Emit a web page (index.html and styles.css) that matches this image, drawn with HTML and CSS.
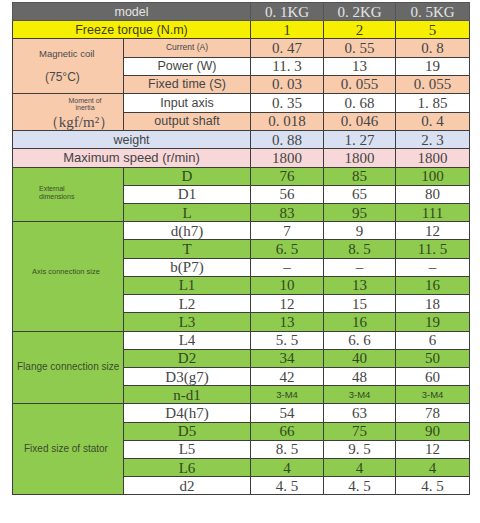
FILE: index.html
```html
<!DOCTYPE html>
<html lang="en">
<head>
    <meta charset="UTF-8">
    <meta name="viewport" content="width=device-width, initial-scale=1.0">
    <title>Brake parameters</title>
    <link rel="stylesheet" href="styles.css">
</head>
<body>
    <table class="spec">
        <colgroup>
            <col class="c-group">
            <col class="c-item">
            <col class="c-val">
            <col class="c-val2">
            <col class="c-val3">
        </colgroup>

        <tr class="head">
            <td colspan="2" class="sans">model</td>
            <td>0. 1KG</td><td>0. 2KG</td><td>0. 5KG</td>
        </tr>
        <tr class="yellow">
            <td colspan="2" class="sans">Freeze torque (N.m)</td>
            <td>1</td><td>2</td><td>5</td>
        </tr>

        <tr class="salmon">
            <td rowspan="3" class="coil">
                <div class="coil-name">Magnetic coil</div>
                <div class="coil-temp">(75°C)</div>
            </td>
            <td class="sans tiny top">Current (A)</td>
            <td>0. 47</td><td>0. 55</td><td>0. 8</td>
        </tr>
        <tr class="white">
            <td class="sans">Power (W)</td>
            <td>11. 3</td><td>13</td><td>19</td>
        </tr>
        <tr class="salmon">
            <td class="sans">Fixed time (S)</td>
            <td>0. 03</td><td>0. 055</td><td>0. 055</td>
        </tr>

        <tr class="white">
            <td rowspan="2" class="salmon-cell inertia">
                <div class="inertia-name">Moment of<br>inertia</div>
                <div class="inertia-unit">（kgf/m²）</div>
            </td>
            <td class="sans">Input axis</td>
            <td>0. 35</td><td>0. 68</td><td>1. 85</td>
        </tr>
        <tr class="salmon">
            <td class="sans">output shaft</td>
            <td>0. 018</td><td>0. 046</td><td>0. 4</td>
        </tr>

        <tr class="lavender">
            <td colspan="2" class="sans">weight</td>
            <td>0. 88</td><td>1. 27</td><td>2. 3</td>
        </tr>
        <tr class="pink">
            <td colspan="2" class="sans big">Maximum speed (r/min)</td>
            <td>1800</td><td>1800</td><td>1800</td>
        </tr>

        <tr class="green">
            <td rowspan="3" class="group g-ext">External<br>dimensions</td>
            <td>D</td><td>76</td><td>85</td><td>100</td>
        </tr>
        <tr class="white"><td>D1</td><td>56</td><td>65</td><td>80</td></tr>
        <tr class="green"><td>L</td><td>83</td><td>95</td><td>111</td></tr>

        <tr class="white">
            <td rowspan="6" class="group g-axis">Axis connection size</td>
            <td>d(h7)</td><td>7</td><td>9</td><td>12</td>
        </tr>
        <tr class="green"><td>T</td><td>6. 5</td><td>8. 5</td><td>11. 5</td></tr>
        <tr class="white"><td>b(P7)</td><td>–</td><td>–</td><td>–</td></tr>
        <tr class="green"><td>L1</td><td>10</td><td>13</td><td>16</td></tr>
        <tr class="white"><td>L2</td><td>12</td><td>15</td><td>18</td></tr>
        <tr class="green"><td>L3</td><td>13</td><td>16</td><td>19</td></tr>

        <tr class="white">
            <td rowspan="4" class="group g-flange">Flange connection size</td>
            <td>L4</td><td>5. 5</td><td>6. 6</td><td>6</td>
        </tr>
        <tr class="green"><td>D2</td><td>34</td><td>40</td><td>50</td></tr>
        <tr class="white"><td>D3(g7)</td><td>42</td><td>48</td><td>60</td></tr>
        <tr class="green"><td>n-d1</td><td class="sans small">3-M4</td><td class="sans small">3-M4</td><td class="sans small">3-M4</td></tr>

        <tr class="white">
            <td rowspan="5" class="group g-stator">Fixed size of stator</td>
            <td>D4(h7)</td><td>54</td><td>63</td><td>78</td>
        </tr>
        <tr class="green"><td>D5</td><td>66</td><td>75</td><td>90</td></tr>
        <tr class="white"><td>L5</td><td>8. 5</td><td>9. 5</td><td>12</td></tr>
        <tr class="green"><td>L6</td><td>4</td><td>4</td><td>4</td></tr>
        <tr class="white"><td>d2</td><td>4. 5</td><td>4. 5</td><td>4. 5</td></tr>
    </table>
</body>
</html>
```

FILE: styles.css
```css
body{
    margin: 0;
    background-color: #fff;
}
.spec{
    border-collapse: collapse;
    table-layout: fixed;
    width: 458px;
    margin: 2px 0 0 12px;
    font-family: "Liberation Serif", serif;
    font-size: 15px;
    color: #454545;
}
.c-group{ width: 111px; }
.c-item{ width: 127px; }
.c-val{ width: 73px; }
.c-val2{ width: 72px; }
.c-val3{ width: 74px; }

.spec tr{
    height: 18.22px;
}
.spec td{
    border: 1px solid #3d3d3d;
    padding: 0;
    text-align: center;
    line-height: 16px;
    white-space: nowrap;
    overflow: hidden;
}
.sans{
    font-family: "Liberation Sans", sans-serif;
    font-size: 12.5px;
}
.sans.big{ font-size: 13px; }
.sans.tiny{ font-size: 8.5px; }
.sans.small{ font-size: 9.5px; }
.top{ vertical-align: top; line-height: 11px; }

/* row colours */
.head td{
    background-color: #686868;
    color: #e4e4e4;
    border-color: #555;
}
.yellow td{ background-color: #f6f000; color: #3f3f20; }
.salmon td, .salmon-cell{ background-color: #f8cbad; }
.white td{ background-color: #fff; }
.lavender td{ background-color: #d8e0f1; }
.pink td{ background-color: #f7d7d8; }
.green td, td.group{ background-color: #8fcb4f; color: #2f4a1f; }
.spec td.salmon-cell{ background-color: #f8cbad; }

/* left group labels */
.coil{
    vertical-align: top;
    font-family: "Liberation Sans", sans-serif;
    color: #4a4a4a;
}
.coil-name{
    font-size: 9.5px;
    padding: 7px 0 0 26px;
    text-align: left;
}
.coil-temp{
    font-size: 12px;
    padding: 7px 0 0 32px;
    text-align: left;
}
.inertia{
    text-align: left;
    vertical-align: top;
    color: #4a4a4a;
}
.inertia-name{
    font-family: "Liberation Sans", sans-serif;
    font-size: 7px;
    line-height: 7px;
    padding: 3px 0 0 34px;
}
.inertia-unit{
    font-size: 15px;
    line-height: 16px;
    padding: 3px 0 0 22px;
}
td.group{
    text-align: left;
    font-family: "Liberation Sans", sans-serif;
    color: #3b4b2c;
}
.spec td.g-ext{
    font-size: 7px;
    line-height: 8px;
    padding-left: 26px;
    padding-bottom: 2px;
}
.spec td.g-axis{
    font-size: 7.5px;
    padding-left: 19px;
    padding-bottom: 8px;
}
.spec td.g-flange{
    font-size: 10px;
    padding-left: 4px;
}
.spec td.g-stator{
    font-size: 10px;
    padding-left: 11px;
}
```
